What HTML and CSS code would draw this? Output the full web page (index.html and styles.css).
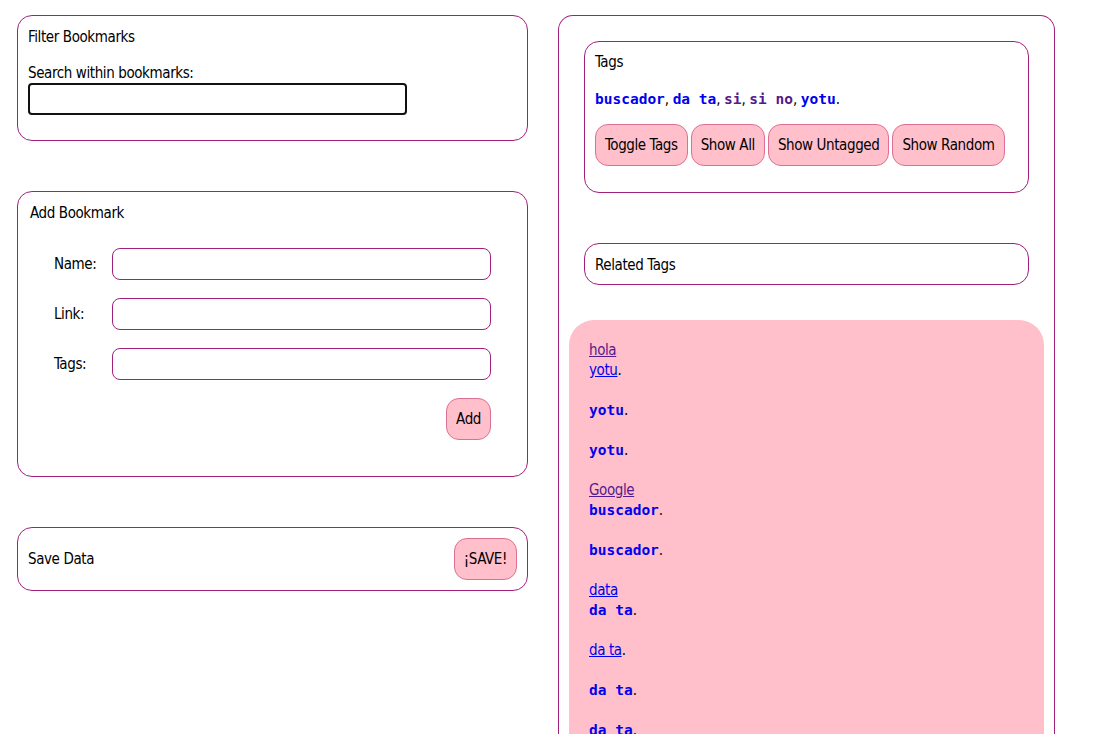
FILE: index.html
```html
<!DOCTYPE html>
<html lang="es">
<head>
<meta charset="utf-8">
<title>Bookmarks</title>
<link rel="stylesheet" href="styles.css">
</head>
<body>
<div class="page">
  <div class="left">
    <section class="card filter">
      <div class="title">Filter Bookmarks</div>
      <label class="search-label">Search within bookmarks:</label>
      <input class="search" type="text">
    </section>

    <section class="card add">
      <div class="title">Add Bookmark</div>
      <div class="form">
        <div class="row"><label>Name:</label><input class="field" type="text"></div>
        <div class="row"><label>Link:</label><input class="field" type="text"></div>
        <div class="row"><label>Tags:</label><input class="field" type="text"></div>
        <div class="actions"><button class="btn">Add</button></div>
      </div>
    </section>

    <section class="card save">
      <div class="title">Save Data</div>
      <button class="btn">¡SAVE!</button>
    </section>
  </div>

  <div class="right">
    <section class="card tags">
      <div class="title">Tags</div>
      <div class="taglist"><a class="tag">buscador</a>, <a class="tag">da ta</a>, <a class="tag seen">si</a>, <a class="tag seen">si no</a>, <a class="tag">yotu</a>.</div>
      <div class="buttons">
        <button class="btn">Toggle Tags</button>
        <button class="btn">Show All</button>
        <button class="btn">Show Untagged</button>
        <button class="btn">Show Random</button>
      </div>
    </section>

    <section class="card related">
      <div class="title">Related Tags</div>
    </section>

    <div class="results">
      <div class="entry"><a class="link seen">hola</a><br><a class="link">yotu</a>.</div>
      <div class="entry"><span class="tag">yotu</span>.</div>
      <div class="entry"><span class="tag">yotu</span>.</div>
      <div class="entry"><a class="link seen">Google</a><br><span class="tag">buscador</span>.</div>
      <div class="entry"><span class="tag">buscador</span>.</div>
      <div class="entry"><a class="link">data</a><br><span class="tag">da ta</span>.</div>
      <div class="entry"><a class="link">da ta</a>.</div>
      <div class="entry"><span class="tag">da ta</span>.</div>
      <div class="entry"><span class="tag">da ta</span>.</div>
    </div>
  </div>
</div>
</body>
</html>
```
FILE: styles.css
```css
html, body {
  margin: 0;
  padding: 0;
  background: #fff;
}
body {
  font-family: "DejaVu Sans Condensed", "DejaVu Sans", sans-serif;
  font-stretch: condensed;
  font-size: 15px;
  letter-spacing: -0.4px;
  line-height: 20px;
  color: #000;
  height: 734px;
  overflow: hidden;
}
.page {
  display: grid;
  grid-template-columns: 511px 497px;
  column-gap: 30px;
  padding: 15px 0 0 17px;
  align-items: start;
}
.card {
  border: 1px solid #a2207c;
  border-radius: 15px;
}
.left {
  display: flex;
  flex-direction: column;
  gap: 50px;
}
.filter {
  padding: 11px 10px 25px 10px;
  display: flex;
  flex-direction: column;
  align-items: flex-start;
}
.search-label {
  margin-top: 16px;
}
.search {
  width: 379px;
  height: 32px;
  box-sizing: border-box;
  border: 2px solid #111;
  border-radius: 4px;
  margin: 0;
  font: inherit;
  letter-spacing: inherit;
}
.add {
  padding: 11px 0 36px 12px;
}
.form {
  padding: 25px 36px 0 24px;
  display: flex;
  flex-direction: column;
  gap: 18px;
}
.row {
  display: flex;
  align-items: center;
}
.row label {
  width: 58px;
  flex: none;
}
.field {
  flex: 1;
  height: 32px;
  box-sizing: border-box;
  border: 1px solid #a2207c;
  border-radius: 8px;
  margin: 0;
  font: inherit;
  letter-spacing: inherit;
}
.actions {
  display: flex;
  justify-content: flex-end;
}
.btn {
  font: inherit;
  letter-spacing: inherit;
  color: #000;
  background: #ffc0cb;
  border: 1px solid #db7093;
  border-radius: 13px;
  height: 42px;
  padding: 0 9px;
  margin: 0;
  white-space: nowrap;
}
.save {
  padding: 10px;
  display: flex;
  justify-content: space-between;
  align-items: center;
}
.right {
  border: 1px solid #a2207c;
  border-bottom: none;
  border-radius: 15px 15px 0 0;
  padding: 25px 25px 0 25px;
  min-height: 760px;
  box-sizing: border-box;
}
.tags {
  padding: 10px 10px 26px 10px;
}
.taglist {
  margin-top: 17px;
}
.tag {
  font-family: "DejaVu Sans Mono", "Liberation Mono", monospace;
  font-stretch: normal;
  font-weight: bold;
  font-size: 14.5px;
  letter-spacing: 0;
  color: #0000ee;
  white-space: pre;
}
.tag.seen {
  color: #551a8b;
}
.buttons {
  margin-top: 15px;
  display: flex;
  gap: 3px;
}
.related {
  margin-top: 50px;
  padding: 11px 10px 9px 10px;
}
.results {
  margin: 35px -15px 0 -15px;
  background: #ffc0cb;
  border-radius: 25px 25px 0 0;
  padding: 20px;
  min-height: 500px;
}
.entry {
  margin-bottom: 20px;
}
.link {
  color: #0000ee;
  text-decoration: underline;
}
.link.seen {
  color: #551a8b;
}
```
